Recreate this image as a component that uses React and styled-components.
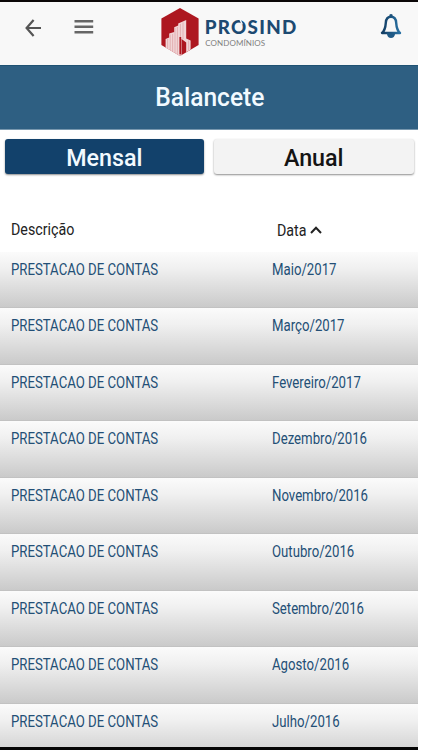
import React, { useState } from "react";
import styled, { createGlobalStyle } from "styled-components";

const balances = [
  "Maio/2017",
  "Março/2017",
  "Fevereiro/2017",
  "Dezembro/2016",
  "Novembro/2016",
  "Outubro/2016",
  "Setembro/2016",
  "Agosto/2016",
  "Julho/2016",
];

const BackIcon = () => (
  <svg width="18" height="20" viewBox="0 0 18 20" fill="none">
    <path d="M9.6 3 L2.6 11 L9.6 19 M2.6 11 H17" stroke="#555" strokeWidth="2.2" />
  </svg>
);

const MenuIcon = () => (
  <svg width="20" height="16" viewBox="0 0 20 16">
    <path d="M0.5 2.3 H19.2 M0.5 7.7 H19.2 M0.5 13.2 H19.2" stroke="#666" strokeWidth="2.6" />
  </svg>
);

const BellIcon = () => (
  <svg width="22" height="26" viewBox="0 0 22 26" fill="none">
    <defs>
      <linearGradient id="bell" x1="0" y1="0" x2="1" y2="0">
        <stop offset="0" stopColor="#123c62" />
        <stop offset="1" stopColor="#2a72a4" />
      </linearGradient>
    </defs>
    <path
      d="M11 3.8 C7.4 3.8 6 6.8 5.8 9.8 C5.5 14.5 4.8 17.4 2 20 H20 C17.2 17.4 16.5 14.5 16.2 9.8 C16 6.8 14.6 3.8 11 3.8 Z"
      stroke="url(#bell)"
      strokeWidth="2.4"
      strokeLinejoin="round"
    />
    <path d="M9.4 3.6 V1.8 Q11 0.2 12.6 1.8 V3.6 Z" fill="#1c5078" />
    <path d="M6.8 20.5 H15.2 Q14.4 25 11 25 Q7.6 25 6.8 20.5 Z" fill="#205a86" />
  </svg>
);

const Logo = () => (
  <svg width="138" height="50" viewBox="160 7 138 50">
    <path d="M180 8 L198.6 18.5 V45 L180 56 L161.4 45 V18.5 Z" fill="#ad1720" />
    <path
      d="M165.6 47.4 V39 L169.2 37.6 V33.4 L174.2 32 V27.2 L178.2 25.6 V23.6 L186.2 20 V38.6 L190.6 40.4 V49.6 L186.2 52.2 V42.6 L181.6 39 V55 L180 56 Z"
      fill="#f1d6d7"
    />
    <path
      d="M167.6 39 V48 M170.2 34.5 V50 M172.6 34 V51.5 M175 28 V53 M177.4 27 V54 M180.4 24 V37 M183 22.5 V39 M188.6 40.5 V50"
      stroke="#dda0a4"
      strokeWidth="0.7"
    />
    <path d="M180.3 37 V54.4" stroke="#ad1720" strokeWidth="1.8" />
    <LogoName x="204.8" y="34.2" textLength="91.5">
      PROSIND
    </LogoName>
    <path d="M239.9 19 L242.2 24.5" stroke="#f8f8f8" strokeWidth="1.5" />
    <LogoCaption x="205.2" y="45.9" textLength="60">
      CONDOMÍNIOS
    </LogoCaption>
  </svg>
);

const App = () => {
  const [period, setPeriod] = useState("mensal");
  const [ascending, setAscending] = useState(true);

  const rows = ascending ? balances : [...balances].reverse();

  return (
    <Screen>
      <GlobalStyle />
      <Header>
        <IconButton aria-label="Voltar">
          <BackIcon />
        </IconButton>
        <MenuButton aria-label="Menu">
          <MenuIcon />
        </MenuButton>
        <LogoBox>
          <Logo />
        </LogoBox>
        <BellButton aria-label="Notificações">
          <BellIcon />
        </BellButton>
      </Header>
      <TitleBar>
        <Title>Balancete</Title>
      </TitleBar>
      <Tabs>
        <Tab $active={period === "mensal"} onClick={() => setPeriod("mensal")}>
          <TabLabel>Mensal</TabLabel>
        </Tab>
        <Tab $active={period === "anual"} onClick={() => setPeriod("anual")}>
          <TabLabel>Anual</TabLabel>
        </Tab>
      </Tabs>
      <TableHead>
        <HeadText>Descrição</HeadText>
        <DateHead onClick={() => setAscending(!ascending)}>
          <HeadText>Data</HeadText>
          <svg width="12" height="8" viewBox="0 0 12 8" fill="none">
            <path d="M1 7 L6 1.8 L11 7" stroke="#222" strokeWidth="2" />
          </svg>
        </DateHead>
      </TableHead>
      <List>
        {rows.map((date) => (
          <Row key={date}>
            <CellText>PRESTACAO DE CONTAS</CellText>
            <CellText>{date}</CellText>
          </Row>
        ))}
      </List>
    </Screen>
  );
};

export default App;

const GlobalStyle = createGlobalStyle`
  * {
    box-sizing: border-box;
  }

  body {
    margin: 0;
    background: #fff;
    font-family: Roboto, sans-serif;
  }

  svg {
    display: block;
  }
`;

const Screen = styled.div`
  display: flex;
  flex-direction: column;
  width: 418px;
  height: 750px;
  overflow: hidden;
  border-top: 2px solid #0b0708;
  border-bottom: 3px solid #050505;
  background: #fff;
`;

const Header = styled.header`
  display: flex;
  align-items: flex-start;
  flex: none;
  height: 63px;
  padding-left: 24px;
  background: #f8f8f8;
`;

const IconButton = styled.button`
  padding: 0;
  border: 0;
  background: none;
  cursor: pointer;
  margin-top: 15px;
`;

const MenuButton = styled(IconButton)`
  margin: 17px 0 0 32px;
`;

const BellButton = styled(IconButton)`
  margin: 11px 0 0 82px;
`;

const LogoBox = styled.div`
  margin: 5px 0 0 66px;
`;

const LogoName = styled.text`
  font: 900 18.8px Lato, sans-serif;
  fill: #1d4a72;
`;

const LogoCaption = styled.text`
  font: 400 8px Lato, sans-serif;
  fill: #808080;
`;

const TitleBar = styled.div`
  display: flex;
  align-items: center;
  justify-content: center;
  flex: none;
  height: 65px;
  padding: 0 0 2px 1px;
  border-top: 1px solid #1f5273;
  border-bottom: 1px solid #7797ae;
  background: #2e5f82;
`;

const Title = styled.h1`
  margin: 0;
  transform: scaleX(0.945);
  color: #f2faff;
  font-size: 26px;
  font-weight: 500;
  line-height: 30px;
`;

const Tabs = styled.div`
  display: grid;
  grid-template-columns: 199px 200px;
  gap: 10px;
  flex: none;
  padding: 9px 0 0 5px;
`;

const Tab = styled.button`
  height: 35px;
  padding: 3px 0 0;
  border: 0;
  border-radius: 3px;
  background: ${(props) => (props.$active ? "#12416b" : "#f3f3f3")};
  color: ${(props) => (props.$active ? "#f2faff" : "#141414")};
  box-shadow: 0 1px 2px rgba(0, 0, 0, 0.45);
  font: 500 24px/30px Roboto, sans-serif;
  cursor: pointer;
`;

const TabLabel = styled.span`
  display: inline-block;
  transform: scaleX(0.97);
`;

const TableHead = styled.div`
  display: grid;
  grid-template-columns: 266px 1fr;
  flex: none;
  height: 77.5px;
  padding: 46px 0 0 10.5px;
`;

const HeadText = styled.span`
  transform: scaleX(0.89);
  transform-origin: left;
  color: #222;
  font-size: 16px;
  line-height: 20px;
`;

const DateHead = styled.div`
  display: flex;
  align-items: flex-start;
  padding-top: 1px;
  cursor: pointer;

  svg {
    margin-top: 5px;
  }
`;

const List = styled.div`
  flex: 1;
  overflow: hidden;
`;

const Row = styled.div`
  display: grid;
  grid-template-columns: 261px 1fr;
  height: 56.5px;
  padding: 8px 0 0 10.5px;
  border-bottom: 1px solid #c2c2c2;
  background: linear-gradient(#fbfbfb, #f0f0f0 30%, #cacaca);
`;

const CellText = styled.span`
  transform: scaleX(0.824);
  transform-origin: left;
  color: #234f76;
  font-size: 16px;
  line-height: 20px;
  white-space: nowrap;
`;
